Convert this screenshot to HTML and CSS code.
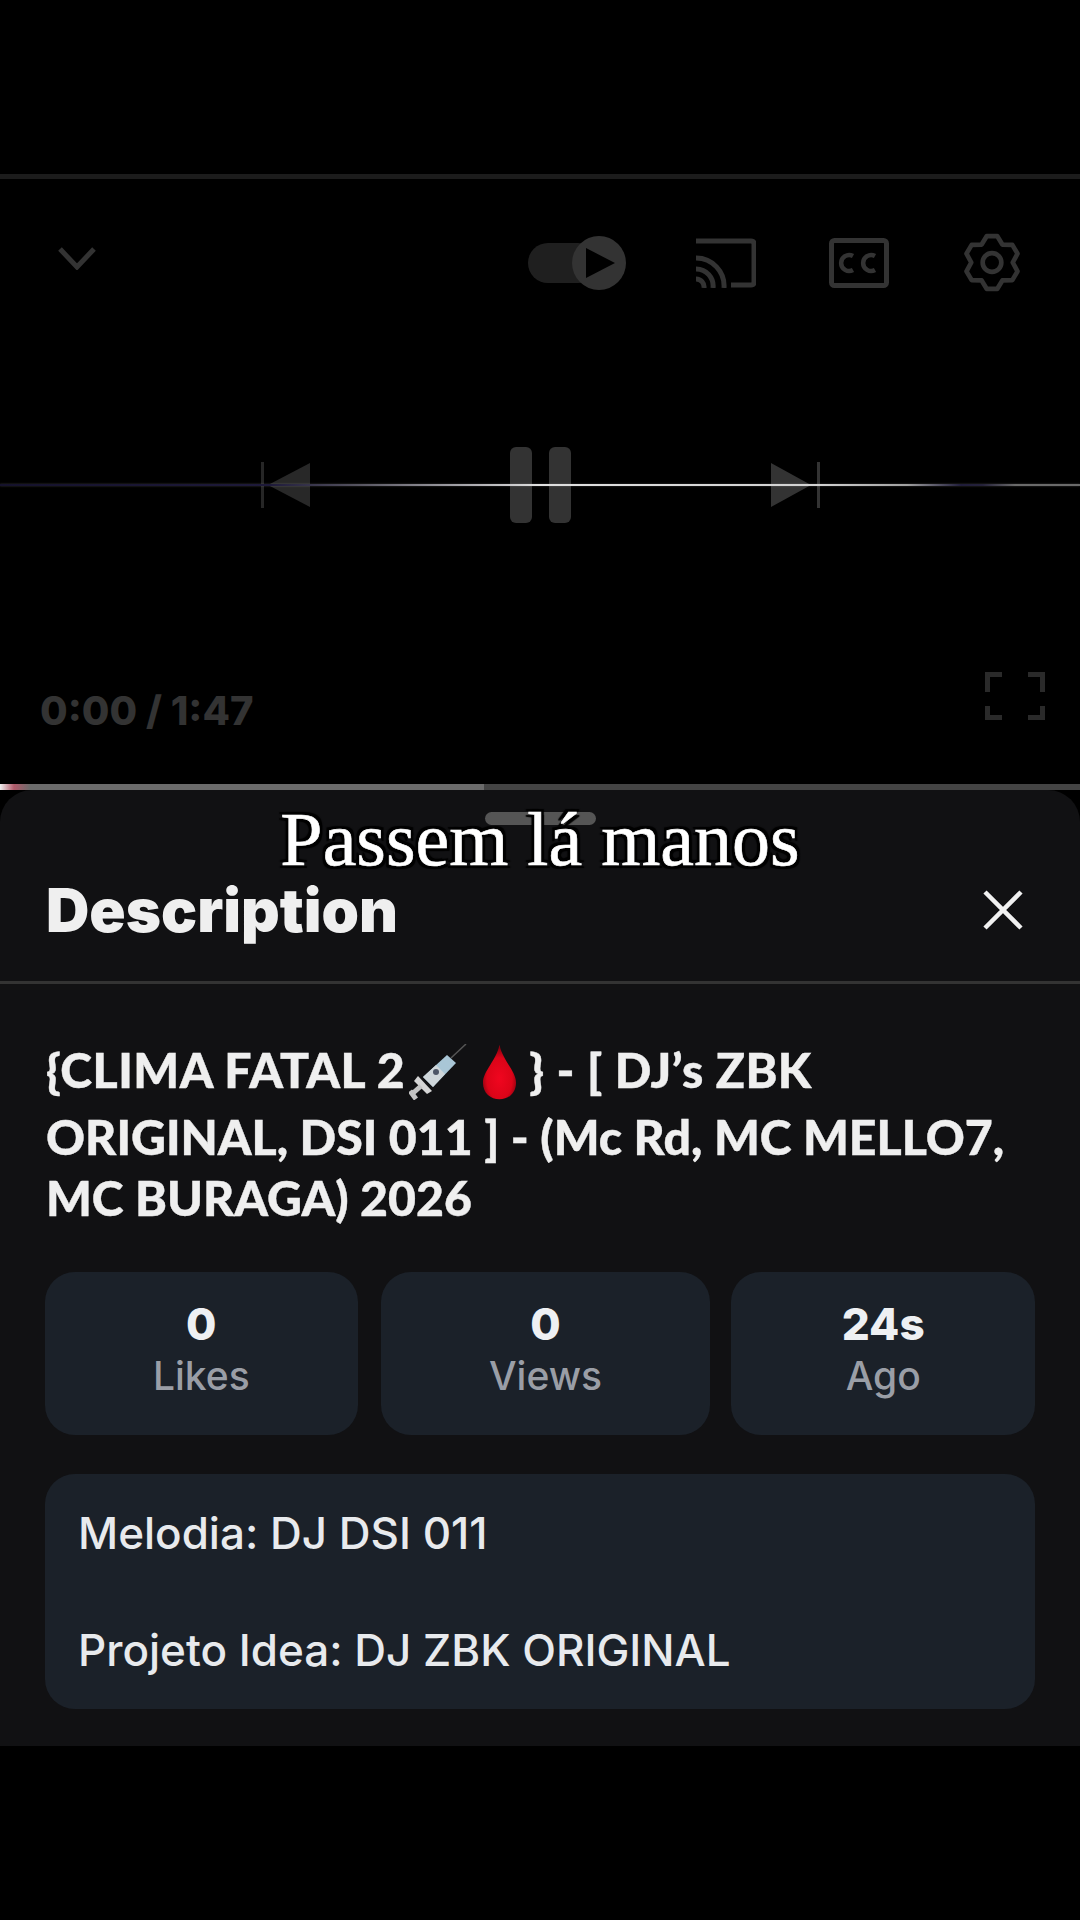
FILE: index.html
```html
<!DOCTYPE html>
<html>
  <head>
    <title>Description</title>
    <link rel="stylesheet" href="styles.css">
  </head>
  <body>
    <div class="top-line"></div>

    <div class="player">
      <div class="scan-line"></div>
      <div class="row-top">
        <svg class="chevron" viewBox="0 0 38 24"><path d="M2 3 L19 21 L36 3" fill="none" stroke="#333" stroke-width="5"/></svg>
        <div class="top-icons">
          <svg class="toggle" viewBox="0 0 98 56">
            <rect x="0" y="8" width="70" height="40" rx="20" fill="#1f1f1f"/>
            <circle cx="71" cy="28" r="27" fill="#333"/>
            <path d="M58 13 L87 28 L58 43 Z" fill="#000"/>
          </svg>
          <svg class="cast" viewBox="0 0 60 50" fill="none" stroke="#333" stroke-width="5">
            <path d="M0 3 H55 Q58 3 58 6 V44 Q58 47 55 47 H35"/>
            <path d="M0 20 A28 28 0 0 1 28 50"/>
            <path d="M0 31 A17 17 0 0 1 17 50"/>
            <path d="M0 41 A8 8 0 0 1 8 50"/>
          </svg>
          <svg class="cc" viewBox="0 0 60 50">
            <rect x="2.5" y="2.5" width="55" height="45" rx="3" fill="none" stroke="#333" stroke-width="5"/>
            <path d="M24 18 A8 8 0 1 0 24 32" fill="none" stroke="#333" stroke-width="4.5"/>
            <path d="M46 18 A8 8 0 1 0 46 32" fill="none" stroke="#333" stroke-width="4.5"/>
          </svg>
          <svg class="gear" viewBox="3 2 54 56" fill="none" stroke="#333" stroke-width="4.5" stroke-linejoin="round">
            <polygon points="25,4.5 35,4.5 40,12.7 49.6,13 54.6,21.5 50,30 54.6,38.5 49.6,47 40,47.3 35,55.5 25,55.5 20,47.3 10.4,47 5.4,38.5 10,30 5.4,21.5 10.4,13 20,12.7"/>
            <circle cx="30" cy="30" r="9"/>
          </svg>
        </div>
      </div>

      <div class="row-center">
        <svg class="skip" viewBox="0 0 49 46"><rect x="0" y="0" width="3" height="46" fill="#262626"/><path d="M7 23 L49 1 V45 Z" fill="#282828"/></svg>
        <div class="pause"><span></span><span></span></div>
        <svg class="skip" viewBox="0 0 49 46"><path d="M0 1 L40 23 L0 45 Z" fill="#333"/><rect x="46" y="0" width="3" height="46" fill="#333"/></svg>
      </div>

      <div class="row-bottom">
        <div class="time">0:00 / 1:47</div>
        <svg class="full" viewBox="0 0 60 48" fill="none" stroke="#2a2a2a" stroke-width="5">
          <path d="M17 2.5 H2.5 V20"/><path d="M43 2.5 H57.5 V20"/><path d="M2.5 34 V45.5 H17"/><path d="M57.5 34 V45.5 H43"/>
        </svg>
      </div>
    </div>

    <div class="progress"><div class="progress-fill"></div></div>

    <div class="panel">
      <div class="caption">Passem lá manos</div>
      <div class="handle"></div>
      <div class="panel-head">
        <h1>Description</h1>
        <svg class="close" viewBox="0 0 40 40"><path d="M2 2 L38 38 M38 2 L2 38" stroke="#f1f1f1" stroke-width="4.5" fill="none"/></svg>
      </div>

      <div class="panel-body">
        <h2 class="title">{CLIMA FATAL 2<svg class="emoji syringe" viewBox="0 0 58 56">
            <path d="M42 14 L57 0" stroke="#555" stroke-width="1.5"/>
            <path d="M14 33 L38 11 L47 19 L24 43 Z" fill="#a9c6d6"/>
            <path d="M14 33 L27 21 L36 30 L24 43 Z" fill="#cfd6da"/>
            <circle cx="27" cy="28" r="3" fill="#4d5566"/>
            <path d="M9 32 L23 47 L18 50 L5 37 Z" fill="#d5d5d5"/>
            <path d="M12 42 L3 50 M1 47 L7 55" stroke="#c4c4c4" stroke-width="5"/>
          </svg><svg class="emoji drop" viewBox="0 0 36 56">
            <defs>
              <radialGradient id="blood" cx="50%" cy="62%" r="55%">
                <stop offset="0%" stop-color="#f0061f"/>
                <stop offset="70%" stop-color="#dc0418"/>
                <stop offset="100%" stop-color="#8e0210"/>
              </radialGradient>
            </defs>
            <path d="M18 0 C21 16 35 27 35 39 C35 50 27 56 18 56 C9 56 1 50 1 39 C1 27 15 16 18 0 Z" fill="url(#blood)"/>
          </svg>} - [ DJ’s ZBK ORIGINAL, DSI 011 ] - (Mc Rd, MC MELLO7, MC BURAGA) 2026</h2>

        <div class="stats">
          <div class="stat stat-likes"><b>0</b><span>Likes</span></div>
          <div class="stat stat-views"><b>0</b><span>Views</span></div>
          <div class="stat stat-ago"><b>24s</b><span>Ago</span></div>
        </div>

        <div class="desc-card">
          <p>Melodia: DJ DSI 011</p>
          <p>&nbsp;</p>
          <p>Projeto Idea: DJ ZBK ORIGINAL</p>
        </div>
      </div>
    </div>
  </body>
</html>
```

FILE: styles.css
```css
* {
  box-sizing: border-box;
}
body {
  margin: 0;
  width: 1080px;
  height: 1920px;
  overflow: hidden;
  background-color: #000;
  font-family: Inter, sans-serif;
  padding-top: 174px;
}
svg {
  display: block;
}
.top-line {
  height: 5px;
  background-color: #1c1c1c;
}

/* player */
.player {
  position: relative;
  height: 605px;
  padding-top: 54px;
}
.scan-line {
  position: absolute;
  left: 0;
  right: 0;
  top: 305px;
  height: 2px;
  z-index: 2;
  box-shadow: 0 0 2px rgba(255, 255, 255, 0.25);
  background: linear-gradient(90deg, #15122c 0%, #1e1a3a 25%, #55535f 33%, #e0e0e0 50%, #d0d0d0 76%, #a0a0a0 84%, #1f1c3a 89%, #25223a 91%, #6a6a6a 94%, #6a6a6a 100%);
}
.row-top {
  display: flex;
  align-items: center;
  height: 59px;
  padding: 0 60px 0 58px;
}
.chevron {
  width: 38px;
  height: 24px;
  margin-top: -10px;
}
.top-icons {
  display: flex;
  align-items: center;
  gap: 73px;
  margin-left: auto;
}
.toggle {
  width: 98px;
  height: 56px;
  margin-right: -3px;
}
.cast,
.cc {
  width: 60px;
  height: 50px;
}
.cc {
  margin-right: 2px;
}
.gear {
  width: 56px;
  height: 59px;
}
.row-center {
  display: flex;
  align-items: center;
  justify-content: center;
  gap: 200px;
  height: 76px;
  margin-top: 155px;
}
.skip {
  width: 49px;
  height: 46px;
}
.pause {
  display: flex;
  gap: 17px;
}
.pause span {
  display: block;
  width: 22px;
  height: 76px;
  border-radius: 6px;
  background-color: #333;
}
.row-bottom {
  display: flex;
  align-items: flex-end;
  justify-content: space-between;
  height: 48px;
  margin-top: 149px;
  padding: 0 35px 0 40px;
}
.time {
  font-weight: 800;
  font-size: 40px;
  line-height: 48px;
  color: #333;
  margin-bottom: -15px;
}
.full {
  width: 60px;
  height: 48px;
}
.progress {
  height: 6px;
  background-color: #444;
}
.progress-fill {
  width: 484px;
  height: 6px;
  background: linear-gradient(90deg, #eee 0, #b05a6a 14px, #6b6b6b 30px);
}

/* bottom sheet */
.panel {
  position: relative;
  height: 956px;
  background-color: #111113;
  border-radius: 32px 32px 0 0;
}
.handle {
  width: 111px;
  height: 13px;
  margin: 0 auto;
  position: relative;
  top: 22px;
  border-radius: 7px;
  background-color: #555;
}
.caption {
  position: absolute;
  top: 11px;
  left: 0;
  right: 0;
  z-index: 3;
  text-align: center;
  font-family: "Liberation Serif", serif;
  font-size: 76px;
  line-height: 76px;
  color: #fff;
  -webkit-text-stroke: 0.6px #fff;
  text-shadow: 3px 3px 1px #000, -3px -3px 1px #000, 3px -3px 1px #000, -3px 3px 1px #000;
}
.panel-head {
  display: flex;
  align-items: center;
  justify-content: space-between;
  height: 181px;
  padding: 35px 57px 0 46px;
  border-bottom: 3px solid #333;
}
.panel-head h1 {
  margin: 0;
  font-size: 60px;
  line-height: 60px;
  font-weight: 900;
  color: #efefef;
}
.close {
  width: 40px;
  height: 40px;
}
.panel-body {
  padding: 0 45px 0 45px;
}
.title {
  margin: 55px 0 0 1px;
  font-family: Lato, sans-serif;
  font-weight: 900;
  font-size: 48.2px;
  line-height: 61px;
  color: #efefef;
  -webkit-text-stroke: 0.4px #efefef;
}
.title::first-line {
  letter-spacing: 0.5px;
}
.emoji {
  display: inline-block;
  vertical-align: -18px;
  height: 56px;
  margin-bottom: 6px;
}
.syringe {
  width: 58px;
  margin-left: 4px;
}
.drop {
  width: 35px;
  margin: 0 12px 6px 15px;
}
.stats {
  display: flex;
  gap: 23px;
  margin-top: 44px;
}
.stat {
  display: flex;
  flex-direction: column;
  align-items: center;
  height: 163px;
  padding-top: 25px;
  border-radius: 30px;
  background-color: #1b2129;
}
.stat-likes {
  width: 313px;
}
.stat-views {
  width: 330px;
}
.stat-ago {
  width: 304px;
  margin-left: -2px;
}
.stat b {
  font-size: 44px;
  line-height: 54px;
  font-weight: 800;
  color: #eef0f3;
}
.stat span {
  font-size: 39px;
  font-weight: 500;
  line-height: 50px;
  color: #9a9ea6;
}
.desc-card {
  margin-top: 39px;
  height: 235px;
  padding: 30px 33px;
  border-radius: 30px;
  background-color: #1b2129;
}
.desc-card p {
  margin: 0;
  font-size: 44px;
  font-weight: 500;
  line-height: 58.5px;
  color: #e8eaed;
}
```
